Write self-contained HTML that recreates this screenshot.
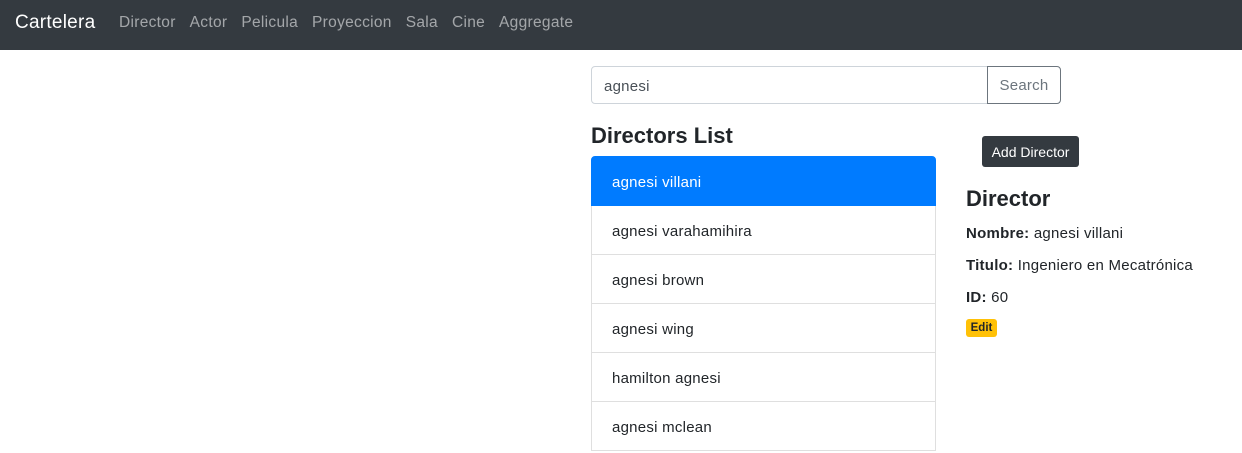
<!DOCTYPE html>
<html><head><meta charset="utf-8"><style>
*{box-sizing:border-box;margin:0;padding:0}
body{width:1242px;height:451px;overflow:hidden;background:#fff;font-family:"Liberation Sans",sans-serif;color:#212529;font-size:15px;position:relative;letter-spacing:.25px}
.nav{position:absolute;left:0;top:0;width:1242px;height:50px;background:#343a40}
.brand{position:absolute;left:15px;top:12px;font-size:19px;color:#fff}
.links{position:absolute;left:119px;top:14px;font-size:15.5px;color:rgba(255,255,255,.55);white-space:nowrap;letter-spacing:.3px}
.links span{margin-right:14px}
.abs{position:absolute}
.input{left:591px;top:66px;width:397px;height:38px;border:1px solid #ced4da;border-radius:4px 0 0 4px;padding:11px 12px;color:#495057}
.btn{left:987px;top:66px;width:74px;height:38px;border:1px solid #6c757d;border-radius:0 4px 4px 0;color:#6c757d;text-align:center;line-height:38px}
h4{position:absolute;font-weight:bold;font-size:22px;letter-spacing:0}
.list{left:591px;top:156px;width:345px}
.item{height:49px;border:1px solid rgba(0,0,0,.125);border-top:none;padding:0 20px;line-height:51px}
.item:first-child{height:50px;border-top:1px solid #007bff;background:#007bff;color:#fff;border-color:#007bff;border-radius:4px 4px 0 0}
.add{left:982px;top:136px;width:97px;height:31px;background:#343a40;color:#fff;border-radius:3px;font-size:14px;text-align:center;line-height:33px;letter-spacing:0}
.p{left:966px;font-size:15px}
.badge{left:966px;top:319px;width:31px;height:18px;background:#ffc107;border-radius:3px;font-size:11.5px;font-weight:bold;text-align:center;line-height:19px;letter-spacing:0}
</style></head><body>
<div class="nav"><div class="brand">Cartelera</div>
<div class="links"><span>Director</span><span>Actor</span><span>Pelicula</span><span>Proyeccion</span><span>Sala</span><span>Cine</span><span>Aggregate</span></div></div>
<div class="abs input">agnesi</div>
<div class="abs btn">Search</div>
<h4 style="left:591px;top:123px">Directors List</h4>
<div class="abs list">
<div class="item">agnesi villani</div>
<div class="item">agnesi varahamihira</div>
<div class="item">agnesi brown</div>
<div class="item">agnesi wing</div>
<div class="item">hamilton agnesi</div>
<div class="item">agnesi mclean</div>
</div>
<div class="abs add">Add Director</div>
<h4 style="left:966px;top:186px">Director</h4>
<div class="abs p" style="top:225px"><b>Nombre:</b> agnesi villani</div>
<div class="abs p" style="top:257px"><b>Titulo:</b> Ingeniero en Mecatrónica</div>
<div class="abs p" style="top:289px"><b>ID:</b> 60</div>
<div class="abs badge">Edit</div>
</body></html>
